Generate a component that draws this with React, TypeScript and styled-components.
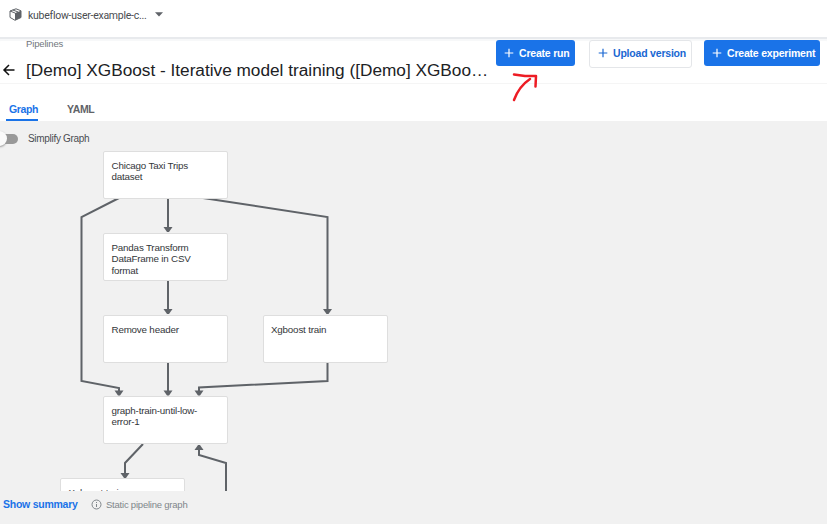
import React from "react";
import styled, { createGlobalStyle } from "styled-components";

const Global = createGlobalStyle`
  * { box-sizing: border-box; }
  body { margin: 0; background: #fff; font-family: "Liberation Sans", Arial, sans-serif; }
`;

const Page = styled.div`
  width: 827px;
  height: 524px;
  overflow: hidden;
  display: flex;
  flex-direction: column;
`;

const NamespaceBar = styled.header`
  height: 37px;
  flex: none;
  display: flex;
  align-items: center;
  padding: 0 0 8px 9px;
  font: 10.5px Roboto, sans-serif;
  letter-spacing: -0.26px;
  color: #4a4d51;
`;

const NamespaceName = styled.span`
  width: 118px;
  margin: 1px 9px 0 6px;
  white-space: nowrap;
`;

const Header = styled.div`
  height: 47px;
  flex: none;
  display: flex;
  justify-content: space-between;
  border-top: 2px solid #e8eaed;
  border-bottom: 1px solid #f5f5f5;
  box-shadow: inset 0 2px 1px #f7f8f9;
`;

const Heading = styled.div`
  display: flex;
  flex-direction: column;
`;

const Breadcrumb = styled.div`
  height: 16px;
  padding-left: 26px;
  font-size: 9.5px;
  letter-spacing: -0.15px;
  line-height: 10px;
  color: #72777c;
`;

const TitleRow = styled.div`
  display: flex;
  align-items: center;
  height: 31px;
`;

const BackArrow = styled.svg`
  margin-top: 4px;
`;

const Title = styled.h1`
  margin: 3px 0 0 10px;
  font-weight: 400;
  font-size: 17.23px;
  line-height: 24px;
  white-space: nowrap;
  color: #202124;
`;

const Actions = styled.div`
  display: flex;
  align-items: flex-start;
  padding: 1px 7px 0 0;
`;

const ActionButton = styled.button<{ $width: number; $outlined?: boolean; $gap?: number }>`
  width: ${(p) => p.$width}px;
  height: ${(p) => (p.$outlined ? 28 : 26)}px;
  margin: 0 0 0 ${(p) => p.$gap ?? 0}px;
  padding: ${(p) => (p.$outlined ? "0 0 2px 8px" : "0 0 0 8px")};
  display: flex;
  align-items: center;
  gap: 5px;
  border: ${(p) => (p.$outlined ? "1px solid #e4e6e9" : "0")};
  border-radius: 3px;
  background: ${(p) => (p.$outlined ? "#fff" : "#1a73e8")};
  color: ${(p) => (p.$outlined ? "#1967d2" : "#fff")};
  font: bold 10.5px "Liberation Sans", Arial, sans-serif;
  letter-spacing: -0.2px;
  white-space: nowrap;

  svg {
    flex: none;
  }
`;

const Tabs = styled.nav`
  height: 37px;
  flex: none;
  display: flex;
  align-items: flex-end;
  padding-left: 6px;
`;

const Tab = styled.div<{ $active?: boolean }>`
  height: 20px;
  width: ${(p) => (p.$active ? 32 : 60)}px;
  margin-right: 26px;
  padding-left: 3px;
  border-bottom: 2px solid ${(p) => (p.$active ? "#1a73e8" : "transparent")};
  font-weight: bold;
  font-size: 10.5px;
  letter-spacing: -0.35px;
  line-height: 16px;
  color: ${(p) => (p.$active ? "#1a73e8" : "#5f6368")};
`;

const GraphPanel = styled.main`
  height: 370px;
  flex: none;
  position: relative;
  overflow: hidden;
  background: #f1f1f1;
`;

const SimplifyRow = styled.label`
  display: flex;
  align-items: center;
  height: 35px;
  font-size: 10px;
  letter-spacing: -0.3px;
  color: #4a4d51;
`;

const SwitchTrack = styled.span`
  width: 18px;
  height: 10px;
  margin-right: 10px;
  border-radius: 0 5px 5px 0;
  background: #999;
`;

const SwitchThumb = styled.span`
  display: block;
  width: 15px;
  height: 15px;
  margin: -2.5px 0 0 -8px;
  border-radius: 50%;
  background: #fafafa;
  box-shadow: 0 1px 2px #999;
`;

const Edges = styled.svg`
  position: absolute;
  left: 0;
  top: 0;
`;

const Node = styled.div<{ $x: number; $y: number }>`
  position: absolute;
  left: ${(p) => p.$x}px;
  top: ${(p) => p.$y}px;
  width: 125px;
  height: 47.5px;
  padding: 7.5px 20px 0 7.5px;
  border: 1px solid #dedede;
  border-radius: 2px;
  background: #fff;
  color: #333639;
  font-size: 9.8px;
  letter-spacing: -0.19px;
  line-height: 11.5px;
`;

const Footer = styled.footer`
  height: 33px;
  display: flex;
  align-items: center;
  padding: 0 0 7px 3px;
  background: #f1f1f1;
`;

const SummaryLink = styled.a`
  width: 88px;
  font-weight: bold;
  font-size: 10.5px;
  letter-spacing: -0.25px;
  color: #1a73e8;
`;

const FooterNote = styled.span`
  margin-left: 4px;
  font-size: 9.5px;
  letter-spacing: -0.22px;
  color: #80868b;
`;

const Annotation = styled.svg`
  position: absolute;
  left: 508px;
  top: 68px;
`;

const Plus = () => (
  <svg width="10" height="10" viewBox="0 0 10 10" stroke="currentColor" strokeWidth="1.2">
    <path d="M5 .7v8.6M.7 5h8.6" />
  </svg>
);

const nodes = [
  { label: "Chicago Taxi Trips dataset", x: 103, y: 30.4 },
  { label: "Pandas Transform DataFrame in CSV format", x: 103, y: 112 },
  { label: "Remove header", x: 103, y: 194 },
  { label: "Xgboost train", x: 262.5, y: 194 },
  { label: "graph-train-until-low-error-1", x: 103, y: 275.4 },
  { label: "Xgboost train", x: 60, y: 357.4 },
];

const lines = [
  "M119 77L81.5 96V260L119 267V270",
  "M168 77V107",
  "M203 77L327.5 96V188",
  "M168 160V188",
  "M168 241V270",
  "M327.5 241V260L199 266.5V270",
  "M143 323L125 342V353",
  "M226 371V342L199 334V329",
];

const heads = [
  [168, 106],
  [327.5, 188],
  [168, 188],
  [119, 269.5],
  [168, 269.5],
  [199, 269.5],
  [125, 352],
];

export default function App() {
  return (
    <Page>
      <Global />
      <NamespaceBar>
        <svg width="13" height="13" viewBox="0 0 13 13">
          <path d="M1 3L7 .8 12 2.8V9.5L6 12.3 1 9.4Z" fill="#fff" stroke="#5f6368" />
          <path d="M6 5L12 2.8V9.5L6 12.3Z" fill="#5f6368" />
          <path d="M1 3L6 5M3.7 2L9 3.9" stroke="#5f6368" fill="none" />
        </svg>
        <NamespaceName>kubeflow-user-example-c...</NamespaceName>
        <svg width="8" height="5" viewBox="0 0 8 5">
          <path d="M0 .3H8L4 4.5Z" fill="#5f6368" />
        </svg>
      </NamespaceBar>
      <Header>
        <Heading>
          <Breadcrumb>Pipelines</Breadcrumb>
          <TitleRow>
            <BackArrow width="16" height="14" viewBox="0 0 16 14" fill="none" stroke="#111" strokeWidth="1.5">
              <path d="M14.5 7H4M9 2L4 7l5 5" />
            </BackArrow>
            <Title>[Demo] XGBoost - Iterative model training ([Demo] XGBoo…</Title>
          </TitleRow>
        </Heading>
        <Actions>
          <ActionButton $width={79}><Plus />Create run</ActionButton>
          <ActionButton $width={103} $outlined $gap={14}><Plus />Upload version</ActionButton>
          <ActionButton $width={116} $gap={12}><Plus />Create experiment</ActionButton>
        </Actions>
      </Header>
      <Tabs>
        <Tab $active>Graph</Tab>
        <Tab>YAML</Tab>
      </Tabs>
      <GraphPanel>
        <SimplifyRow>
          <SwitchTrack><SwitchThumb /></SwitchTrack>
          Simplify Graph
        </SimplifyRow>
        <Edges width="827" height="370">
          {lines.map((d) => <path key={d} d={d} fill="none" stroke="#5f6368" strokeWidth="2" />)}
          {heads.map(([x, y]) => <path key={`${x}-${y}`} d={`M${x - 4.5} ${y}h9l-3.5 5h-2z`} fill="#5f6368" />)}
          <path d="M194.5 329h9l-3.5-5h-2z" fill="#5f6368" />
        </Edges>
        {nodes.map((n) => <Node key={`${n.x}-${n.y}`} $x={n.x} $y={n.y}>{n.label}</Node>)}
      </GraphPanel>
      <Footer>
        <SummaryLink>Show summary</SummaryLink>
        <svg width="11" height="11" viewBox="0 0 11 11" fill="none" stroke="#80868b">
          <circle cx="5.5" cy="5.5" r="4.5" />
          <path d="M5.5 5v3M5.5 3v1" />
        </svg>
        <FooterNote>Static pipeline graph</FooterNote>
      </Footer>
      <Annotation width="34" height="36" fill="none" stroke="#ed1c24" strokeWidth="2.5" strokeLinecap="round" strokeLinejoin="round">
        <path d="M6 6.5L17 8L28 8L27.5 18.5M22 11C16 15 10 21 6 32" />
      </Annotation>
    </Page>
  );
}
